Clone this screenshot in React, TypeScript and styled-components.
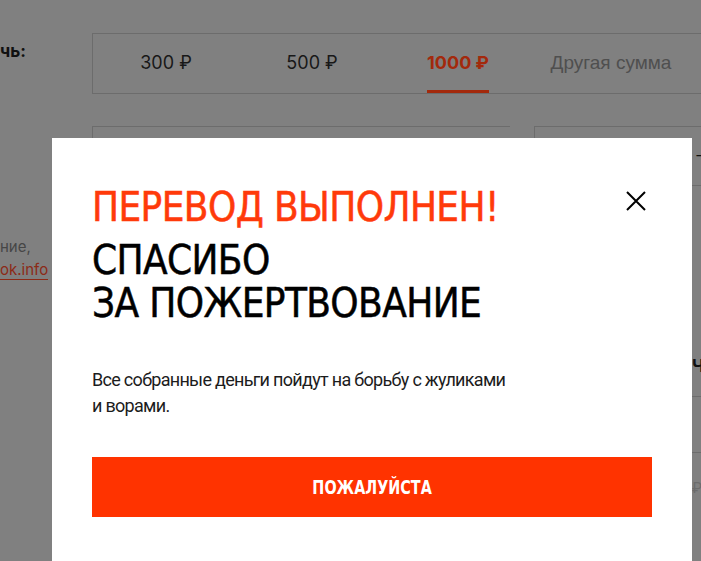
import styled, { createGlobalStyle } from "styled-components";

const GlobalStyle = createGlobalStyle`
  html, body {
    margin: 0;
    padding: 0;
    background: #808080;
    overflow: hidden;
  }
  body {
    font-family: "Roboto", "Liberation Sans", sans-serif;
  }
`;

// dimmed donation page behind the popup
const Page = styled.div`
  display: grid;
  grid-template-columns: 92px 1fr;
  height: 561px;
  padding-top: 33px;
  box-sizing: border-box;
  color: #111;
`;

const Side = styled.div`
  display: flex;
  flex-direction: column;
`;

const SideLabel = styled.div`
  margin-top: 8px;
  font-family: "Inter", "Roboto", sans-serif;
  font-weight: 700;
  font-size: 17px;
`;

const SideNote = styled.div`
  margin-top: 174px;
  font-family: "Inter", "Roboto", sans-serif;
  font-size: 15px;
  line-height: 23px;
  color: #464646;
`;

const SideLink = styled.a`
  color: #8c2a17;
  text-decoration: none;
  border-bottom: 1px solid #8c2a17;
`;

const Main = styled.div`
  display: flex;
  flex-direction: column;
`;

const Tabs = styled.div`
  display: grid;
  grid-template-columns: repeat(3, 146px) 160px;
  height: 59px;
  border: 1px solid #6c6c6c;
  border-right: none;
`;

const Tab = styled.div<{ $active?: boolean; $muted?: boolean }>`
  display: flex;
  justify-content: center;
  align-items: stretch;
  font-family: ${(p) => (p.$muted ? `"Liberation Sans", Arial, sans-serif` : `"Inter", "Roboto", sans-serif`)};
  font-size: ${(p) => (p.$muted ? "19px" : "18px")};
  font-weight: ${(p) => (p.$active ? 700 : 400)};
  color: ${(p) => (p.$active ? "#a3290c" : p.$muted ? "#4f4f4f" : "#181818")};
`;

const TabText = styled.span<{ $active?: boolean }>`
  display: flex;
  align-items: center;
  padding-top: 1px;
  border-bottom: 3px solid ${(p) => (p.$active ? "#a3290c" : "transparent")};
`;

const Fields = styled.div`
  display: grid;
  grid-template-columns: 418px 1fr;
  gap: 24px;
  margin-top: 32px;
`;

const Field = styled.div`
  height: 58px;
  border: 1px solid #6c6c6c;
  border-right: none;
  padding-left: 160px;
  font-size: 18px;
  line-height: 58px;
  color: #111;
`;

const Lower = styled.div`
  margin-top: 170px;
  padding-left: 600px;
  display: flex;
  flex-direction: column;
`;

const LowerLabel = styled.div`
  font-family: "Inter", "Roboto", sans-serif;
  font-weight: 700;
  font-size: 17px;
  color: #111;
`;

const LowerBox = styled.div`
  margin-top: 20px;
  height: 55px;
  border-top: 1px solid #6c6c6c;
  border-bottom: 1px solid #6c6c6c;
`;

const LowerHint = styled.div`
  margin-top: 26px;
  font-size: 15px;
  color: #6c6c6c;
`;

// popup
const Modal = styled.div`
  position: fixed;
  left: 52px;
  top: 138px;
  width: 640px;
  box-sizing: border-box;
  padding: 48px 40px 50px;
  background: #fff;
  color: #111;
`;

const Head = styled.div`
  display: flex;
  justify-content: space-between;
  align-items: flex-start;
`;

const Titles = styled.div`
  font-family: "DejaVu Sans Condensed", "DejaVu Sans", sans-serif;
  font-stretch: condensed;
  font-size: 40px;
  line-height: 43px;
  letter-spacing: -0.6px;
  -webkit-text-stroke: 0.5px currentColor;
  text-transform: uppercase;
`;

const Accent = styled.div`
  color: #ff3a0a;
  margin-bottom: 10px;
`;

const Thanks = styled.div`
  color: #000;
`;

const Close = styled.button`
  display: flex;
  margin: 5px 6px 0 0;
  padding: 0;
  border: none;
  background: none;
  cursor: pointer;
`;

const Text = styled.p`
  margin: 42px 0 0;
  font-family: "Roboto", "Liberation Sans", sans-serif;
  font-size: 18px;
  line-height: 26px;
  letter-spacing: -0.7px;
  color: #1c1c1c;
`;

const Action = styled.button`
  display: flex;
  justify-content: center;
  align-items: center;
  width: 100%;
  height: 60px;
  margin-top: 38px;
  border: none;
  background: #ff3300;
  cursor: pointer;
`;

const ActionLabel = styled.span`
  display: inline-block;
  transform: scaleX(0.84);
  color: #fff;
  font-family: "DejaVu Sans Condensed", "DejaVu Sans", sans-serif;
  font-stretch: condensed;
  font-weight: 700;
  font-size: 19px;
`;

export default function App() {
  return (
    <>
      <GlobalStyle />
      <Page>
        <Side>
          <SideLabel>чь:</SideLabel>
          <SideNote>
            ние,
            <br />
            <SideLink href="#">ok.info</SideLink>
          </SideNote>
        </Side>
        <Main>
          <Tabs>
            <Tab>
              <TabText>300 ₽</TabText>
            </Tab>
            <Tab>
              <TabText>500 ₽</TabText>
            </Tab>
            <Tab $active>
              <TabText $active>1000 ₽</TabText>
            </Tab>
            <Tab $muted>
              <TabText>Другая сумма</TabText>
            </Tab>
          </Tabs>
          <Fields>
            <Field />
            <Field>–</Field>
          </Fields>
          <Lower>
            <LowerLabel>Ч</LowerLabel>
            <LowerBox />
            <LowerHint>₽</LowerHint>
          </Lower>
        </Main>
      </Page>
      <Modal>
        <Head>
          <Titles>
            <Accent>Перевод выполнен!</Accent>
            <Thanks>
              Спасибо
              <br />
              за пожертвование
            </Thanks>
          </Titles>
          <Close aria-label="Закрыть">
            <svg width="20" height="20" viewBox="0 0 20 20" fill="none" stroke="#000" strokeWidth="2">
              <path d="M1 1 L19 19 M19 1 L1 19" />
            </svg>
          </Close>
        </Head>
        <Text>
          Все собранные деньги пойдут на борьбу с жуликами
          <br />и ворами.
        </Text>
        <Action>
          <ActionLabel>ПОЖАЛУЙСТА</ActionLabel>
        </Action>
      </Modal>
    </>
  );
}
